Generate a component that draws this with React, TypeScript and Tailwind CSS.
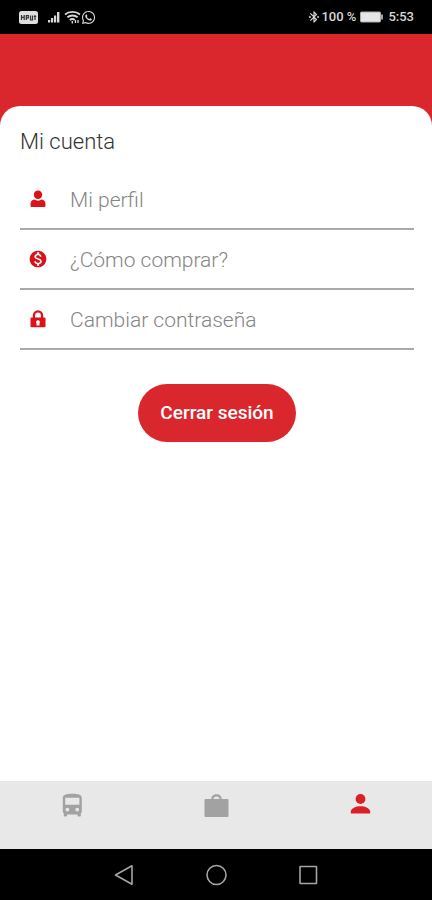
import { FaWhatsapp } from 'react-icons/fa';
import { MdBluetoothConnected, MdMonetizationOn } from 'react-icons/md';
import type { ReactNode } from 'react';

function UserIcon() {
  return (
    <svg viewBox="0 0 16 18" className="w-4 h-[18px]" fill="currentColor" aria-hidden="true">
      <circle cx="8" cy="4.800" r="4.200" />
      <path d="M4.200 9.600c1.100.7 2.400 1.100 3.800 1.100s2.700-.4 3.800-1.100c2.200.4 3.700 2.200 3.700 4.400v1.800a1.200 1.200 0 0 1-1.200 1.200H1.700A1.200 1.200 0 0 1 .5 15.800V14c0-2.200 1.500-4 3.700-4.400Z" />
    </svg>
  );
}

function LockIcon() {
  return (
    <svg viewBox="0 0 16 18" className="w-4 h-[18px]" fill="currentColor" aria-hidden="true">
      <path
        fillRule="evenodd"
        d="M2.800 7.500V5.400a5.200 5.200 0 0 1 10.400 0v2.100h1.300a1 1 0 0 1 1 1v7.700a1 1 0 0 1-1 1H1.500a1 1 0 0 1-1-1V8.500a1 1 0 0 1 1-1h1.300Zm2.300 0h5.800v-2a2.900 2.900 0 0 0-5.800 0v2ZM8 10.200a1.900 1.900 0 0 0-1.500 3.100V15.400h3v-2.100A1.900 1.900 0 0 0 8 10.200Z"
      />
    </svg>
  );
}

function BusIcon() {
  return (
    <svg viewBox="0 0 22 24" className="h-6 w-[22px]" fill="currentColor" aria-hidden="true">
      <path
        fillRule="evenodd"
        d="M1.800 5C1.800 1.800 5 .8 11.300 .8S20.800 1.800 20.800 5v13.600c0 .8-.4 1.500-1 2v2.200a.8.8 0 0 1-.8.8h-1.600a.8.8 0 0 1-.8-.8V21.400H6v1.400a.8.8 0 0 1-.8.8H3.600a.8.8 0 0 1-.8-.8v-2.200c-.6-.5-1-1.200-1-2V5Zm2.400-.2v7h14.200v-7H4.200ZM6.400 14.700a1.900 1.900 0 1 0 0 3.800 1.900 1.900 0 0 0 0-3.800Zm9.800 0a1.900 1.900 0 1 0 0 3.800 1.900 1.900 0 0 0 0-3.800Z"
      />
    </svg>
  );
}

function BriefcaseIcon() {
  return (
    <svg viewBox="0 0 26 26" className="size-[26px]" fill="currentColor" aria-hidden="true">
      <path
        fillRule="evenodd"
        d="M8.300 6V5.800C8.300 3.200 10.500 1.200 13.500 1.200s5.200 2 5.200 4.600V6H24.500a1 1 0 0 1 1 1V23a1 1 0 0 1-1 1H2.500a1 1 0 0 1-1-1V7a1 1 0 0 1 1-1h5.800Zm2.200 0h6v-.2c0-1.500-1.200-2.400-3-2.400s-3 .9-3 2.400V6Z"
      />
    </svg>
  );
}

function PersonIcon() {
  return (
    <svg viewBox="0 0 22 22" className="size-[22px]" fill="currentColor" aria-hidden="true">
      <circle cx="11.500" cy="6" r="4.900" />
      <path d="M1.800 20v-1.200c0-3.600 5.200-5.600 9.700-5.600s9.700 2 9.700 5.600V20a.6.6 0 0 1-.6.6H2.400a.6.6 0 0 1-.6-.6Z" />
    </svg>
  );
}

function StatusBar() {
  return (
    <header className="flex h-[34px] items-center justify-between bg-black pl-[19px] pr-[18px] text-[#d8d8d8]">
      <div className="flex items-center">
        <svg viewBox="0 0 19 13" className="h-[13px] w-[19px]" aria-hidden="true">
          <rect width="19" height="13" rx="2.500" fill="#dedede" />
          <path d="M2.500 4v5M2.500 6.300h2.700M5.200 4v5M7.300 9V4.500h2V6.800h-2M11.500 4.500V9h2V4.500M16 4v5M14.800 5.500h2.400" fill="none" stroke="#333" strokeWidth="1.200" />
        </svg>
        <svg viewBox="0 0 12 12" className="ml-2.5 size-3" fill="currentColor" aria-hidden="true">
          <path d="M0 9h2.200v2.500H0zM3 7h2.200v4.500H3zM6 4.500h2.200v7H6zM9 1h2.400v10.500H9z" />
        </svg>
        <svg viewBox="0 0 17 14" className="ml-1 h-[14px] w-[17px]" fill="none" stroke="currentColor" strokeWidth="1.800" aria-hidden="true">
          <path d="M1 4.500c4-3.600 11-3.600 15 0M3.400 7.300c2.800-2.400 7.400-2.400 10.200 0M5.800 10c1.600-1.200 3.600-1.200 5 0" />
          <path d="M8.300 11v2.500M11.500 10v3M14 13v-3" strokeWidth="1.300" />
        </svg>
        <FaWhatsapp size={15} />
      </div>
      <div className="flex items-center text-[13px] font-medium">
        <MdBluetoothConnected size={14} />
        <span>100 %</span>
        <svg viewBox="0 0 24 12" className="ml-1 h-3 w-6" aria-hidden="true">
          <rect x=".5" y="1" width="20" height="10" rx="1" fill="#e6e6e6" stroke="#aaa" />
          <path d="M22 3.500v5" stroke="#ccc" strokeWidth="1.600" />
        </svg>
        <span className="ml-1">5:53</span>
      </div>
    </header>
  );
}

interface MenuItemProps {
  icon: ReactNode;
  label: string;
}

function MenuItem({ icon, label }: MenuItemProps) {
  return (
    <li>
      <button className="flex h-[60px] w-full items-center border-b-2 border-[#a9a9a9] text-left">
        <span className="flex w-9 justify-center text-[#da1219]">{icon}</span>
        <span className="ml-3.5 pt-[3px] text-[21px] font-light text-[#858585]">{label}</span>
      </button>
    </li>
  );
}

const menuItems: MenuItemProps[] = [
  { icon: <UserIcon />, label: 'Mi perfil' },
  { icon: <MdMonetizationOn size={20} />, label: '¿Cómo comprar?' },
  { icon: <LockIcon />, label: 'Cambiar contraseña' },
];

export default function App() {
  return (
    <div className="flex min-h-screen flex-col bg-[#da272d] font-[Roboto,sans-serif]">
      <StatusBar />

      <main className="mt-[72px] flex-1 rounded-t-[20px] bg-white pt-5 pr-[18px] pl-5">
        <h1 className="text-[22px] leading-8 font-light text-[#333]">Mi cuenta</h1>
        <ul className="mt-3">
          {menuItems.map((item) => (
            <MenuItem key={item.label} {...item} />
          ))}
        </ul>
        <div className="mt-[34px] flex justify-center">
          <button className="h-[58px] rounded-full bg-[#da272d] px-[22px] text-[19px] font-medium text-white">
            Cerrar sesión
          </button>
        </div>
      </main>

      {/* Tabs */}
      <nav className="grid h-[68px] grid-cols-3 bg-[#e8e8e8] text-[#a2a2a2]">
        <button aria-label="Viajes" className="flex justify-center pt-3">
          <BusIcon />
        </button>
        <button aria-label="Equipaje" className="flex justify-center pt-3">
          <BriefcaseIcon />
        </button>
        <button aria-label="Mi cuenta" className="flex justify-center pt-3 text-[#da1f26]">
          <PersonIcon />
        </button>
      </nav>

      {/* System navigation */}
      <footer className="flex h-[51px] items-center justify-center gap-[70px] bg-black text-[#a5a5a5]">
        <button aria-label="Atrás">
          <svg viewBox="0 0 22 22" className="size-[22px]" fill="none" stroke="currentColor" strokeWidth="1.600" strokeLinejoin="round">
            <path d="M2.500 11 19 1.800v18.400Z" />
          </svg>
        </button>
        <button aria-label="Inicio">
          <svg viewBox="0 0 22 22" className="size-[22px]" fill="none" stroke="currentColor" strokeWidth="1.600">
            <circle cx="11.500" cy="11" r="9.500" />
          </svg>
        </button>
        <button aria-label="Recientes">
          <svg viewBox="0 0 22 22" className="size-[22px]" fill="none" stroke="currentColor" strokeWidth="1.600">
            <rect x="3" y="2.500" width="16.500" height="17" rx=".5" />
          </svg>
        </button>
      </footer>
    </div>
  );
}
